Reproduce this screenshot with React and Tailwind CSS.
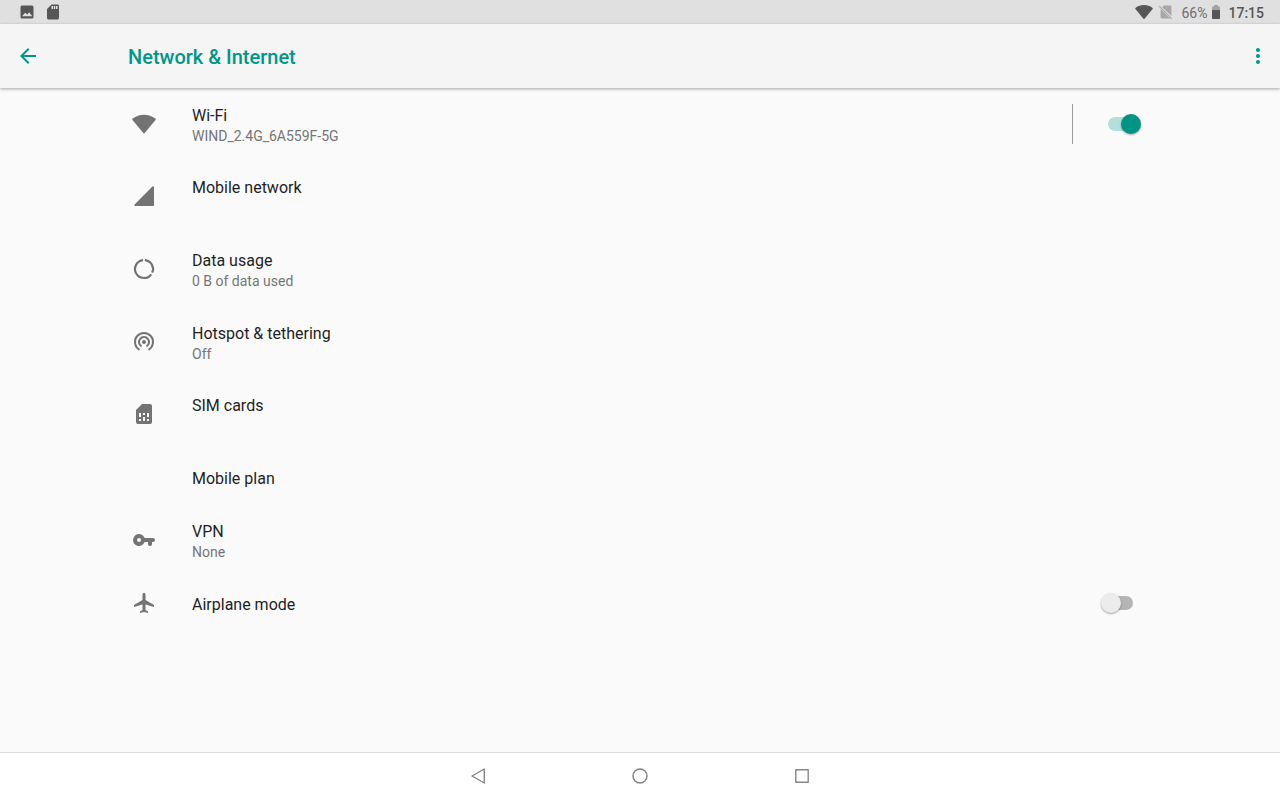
import {
  MdAirplanemodeActive,
  MdArrowBack,
  MdMoreVert,
  MdSdCard,
} from "react-icons/md";

function WifiIcon({ className }) {
  return (
    <svg viewBox="0 0 24 24" className={className} fill="currentColor" aria-hidden="true">
      <path d="M11.3 21.1 0.5 7.9C0.1 7.4 0.1 6.8 0.6 6.5 4 4.2 7.8 2.8 12 2.8s8 1.4 11.4 3.7c.5.3.5.9.1 1.4L12.7 21.1c-.4.5-1 .5-1.4 0z" />
    </svg>
  );
}

function SignalIcon({ className }) {
  return (
    <svg viewBox="0 0 24 24" className={className} fill="currentColor" aria-hidden="true">
      <path d="M3.2 22H21c.5 0 1-.4 1-1V3.2c0-.9-1-1.2-1.6-.6L2.6 20.4c-.6.6-.3 1.6.6 1.6z" />
    </svg>
  );
}

function DataUsageIcon({ className }) {
  return (
    <svg
      viewBox="0 0 24 24"
      className={className}
      fill="none"
      stroke="currentColor"
      strokeWidth="2.2"
      aria-hidden="true"
    >
      <path d="M12.95 3.05A9 9 0 0 1 20.22 15.66" />
      <path d="M19.28 17.29A9 9 0 1 1 11.05 3.05" />
    </svg>
  );
}

function HotspotIcon({ className }) {
  return (
    <svg
      viewBox="0 0 24 24"
      className={className}
      fill="none"
      stroke="currentColor"
      strokeWidth="2"
      aria-hidden="true"
    >
      <circle cx="12" cy="12" r="2" fill="currentColor" stroke="none" />
      <path d="M9.5 16.33A5 5 0 1 1 14.5 16.33" />
      <path d="M7.5 19.79A9 9 0 1 1 16.5 19.79" />
    </svg>
  );
}

function SimIcon({ className }) {
  return (
    <svg viewBox="0 0 24 24" className={className} fill="currentColor" aria-hidden="true">
      <path
        fillRule="evenodd"
        d="M10 2h8a2 2 0 0 1 2 2v16a2 2 0 0 1-2 2H6a2 2 0 0 1-2-2V8zM7 11v4h2v-4zM11 11v2h2v-2zM15 11v4h2v-4zM7 17v2h2v-2zM11 15v4h2v-4zM15 17v2h2v-2z"
      />
    </svg>
  );
}

function KeyIcon({ className }) {
  return (
    <svg viewBox="0 0 24 24" className={className} fill="currentColor" aria-hidden="true">
      <path
        fillRule="evenodd"
        d="M12.65 10A6 6 0 1 0 12.65 14H16v2.2a1.8 1.8 0 0 0 1.8 1.8h.4a1.8 1.8 0 0 0 1.8-1.8V14h1a2 2 0 0 0 0-4zM7 14a2 2 0 1 1 0-4 2 2 0 0 1 0 4z"
      />
    </svg>
  );
}

function PictureIcon({ className }) {
  return (
    <svg viewBox="0 0 18 18" className={className} fill="currentColor" aria-hidden="true">
      <path
        fillRule="evenodd"
        d="M4 2.5h10A1.5 1.5 0 0 1 15.5 4v10a1.5 1.5 0 0 1-1.5 1.5H4A1.5 1.5 0 0 1 2.5 14V4A1.5 1.5 0 0 1 4 2.5zM4 13.2h10.2l-3-3.9-1.9 2.2-2.1-1.7z"
      />
    </svg>
  );
}

function NoSimIcon({ className }) {
  return (
    <svg viewBox="0 0 18 18" className={className} aria-hidden="true">
      <path
        fill="currentColor"
        d="M7 2.5h6c.8 0 1.4.6 1.4 1.4v9L5 3.9zM3.6 5.9 13.2 15.5H5c-.8 0-1.4-.6-1.4-1.4z"
      />
      <path d="M2.2 3.2 14.8 15.8" stroke="currentColor" strokeWidth="1.2" />
    </svg>
  );
}

function BatteryIcon({ className }) {
  return (
    <svg viewBox="0 0 10 16" className={className} aria-hidden="true">
      <path fill="#a3a3a3" d="M3 1h4v1.5h1.3c.4 0 .7.3.7.7V7H1V3.2c0-.4.3-.7.7-.7H3z" />
      <path fill="#565656" d="M1 6h8v8.3c0 .4-.3.7-.7.7H1.7c-.4 0-.7-.3-.7-.7z" />
    </svg>
  );
}

function Switch({ label, defaultChecked }) {
  return (
    <input
      type="checkbox"
      role="switch"
      aria-label={label}
      defaultChecked={defaultChecked}
      className="relative h-5 w-10 shrink-0 cursor-pointer appearance-none before:absolute before:top-[3px] before:left-[7px] before:h-3.5 before:w-[25px] before:rounded-full before:bg-[#b5b5b5] after:absolute after:top-0 after:left-0 after:size-5 after:rounded-full after:bg-[#ececec] after:shadow-[0_1px_2px_rgba(0,0,0,0.35)] checked:before:bg-[#b4dfda] checked:after:left-5 checked:after:bg-[#009485]"
    />
  );
}

const settings = [
  { title: "Wi-Fi", summary: "WIND_2.4G_6A559F-5G", icon: WifiIcon, toggle: "on", divider: true },
  { title: "Mobile network", summary: "", icon: SignalIcon },
  { title: "Data usage", summary: "0 B of data used", icon: DataUsageIcon },
  { title: "Hotspot & tethering", summary: "Off", icon: HotspotIcon },
  { title: "SIM cards", summary: "", icon: SimIcon },
  { title: "Mobile plan" },
  { title: "VPN", summary: "None", icon: KeyIcon },
  { title: "Airplane mode", icon: MdAirplanemodeActive, toggle: "off" },
];

function rowHeight(summary) {
  if (summary === undefined) return "min-h-[53px]";
  return summary ? "min-h-[73px]" : "min-h-[72px]";
}

function SettingRow({ title, summary, icon: Icon, toggle, divider }) {
  return (
    <li className={`flex items-center pb-0.5 ${rowHeight(summary)}`}>
      <a href="#" className="flex flex-1 items-center">
        <span className="flex w-16 shrink-0 items-center px-1 text-[#737373]">
          {Icon && <Icon className="size-6" />}
        </span>
        <span className="flex flex-col pt-1">
          <span className="text-base leading-5 text-[#1f1f1f]">{title}</span>
          {summary !== undefined && (
            <span className="h-5 text-sm leading-5 text-[#757575]">{summary}</span>
          )}
        </span>
      </a>
      {divider && <span className="mr-7 h-10 w-px bg-[#9a9a9a]" />}
      {toggle && <Switch label={title} defaultChecked={toggle === "on"} />}
    </li>
  );
}

function StatusBar() {
  return (
    <div className="flex h-6 items-center justify-between bg-[#e0e0e0] px-4 text-[#565656]">
      <div className="flex items-center gap-2 pl-0.5">
        <PictureIcon className="size-[18px]" />
        <MdSdCard className="size-[18px]" />
      </div>
      <div className="flex items-center text-sm leading-6">
        <WifiIcon className="size-[18px]" />
        <NoSimIcon className="ml-1 size-[18px] text-[#a8a8a8]" />
        <span className="ml-1.5 pt-0.5 text-[#6e6e6e]">66%</span>
        <BatteryIcon className="ml-1 h-4 w-2.5" />
        <span className="ml-[7px] pt-0.5 font-medium">17:15</span>
      </div>
    </div>
  );
}

function NavBar() {
  return (
    <nav className="flex h-12 items-center justify-center gap-[114px] border-t border-[#dcdcdc] bg-white pb-px text-[#858585]">
      <button type="button" aria-label="Back" className="flex h-10 w-12 items-center justify-center">
        <svg viewBox="0 0 24 24" className="size-6" fill="none" stroke="currentColor" strokeWidth="1.4" strokeLinejoin="round">
          <path d="M18.3 5v14L6 12z" />
        </svg>
      </button>
      <button type="button" aria-label="Home" className="flex h-10 w-12 items-center justify-center">
        <svg viewBox="0 0 24 24" className="size-6" fill="none" stroke="currentColor" strokeWidth="1.5">
          <circle cx="12" cy="12" r="7" />
        </svg>
      </button>
      <button type="button" aria-label="Recent apps" className="flex h-10 w-12 items-center justify-center">
        <svg viewBox="0 0 24 24" className="size-6" fill="none" stroke="currentColor" strokeWidth="1.4" strokeLinejoin="round">
          <rect x="5.8" y="5.8" width="12.4" height="12.4" />
        </svg>
      </button>
    </nav>
  );
}

export default function App() {
  return (
    <div className="flex min-h-screen flex-col bg-[#fafafa] font-[Roboto,sans-serif]">
      <StatusBar />
      <header className="flex h-16 items-center bg-[#f5f5f5] pr-2.5 pl-4 text-[#009688] shadow-[0_1px_3px_rgba(0,0,0,0.35)]">
        <div className="flex w-28 shrink-0">
          <button type="button" aria-label="Navigate up">
            <MdArrowBack className="size-6" />
          </button>
        </div>
        <h1 className="flex-1 pt-0.5 text-xl font-medium">Network &amp; Internet</h1>
        <button type="button" aria-label="More options">
          <MdMoreVert className="size-6" />
        </button>
      </header>
      <main className="flex-1">
        <ul className="pr-[139px] pl-32">
          {settings.map((item) => (
            <SettingRow key={item.title} {...item} />
          ))}
        </ul>
      </main>
      <NavBar />
    </div>
  );
}
